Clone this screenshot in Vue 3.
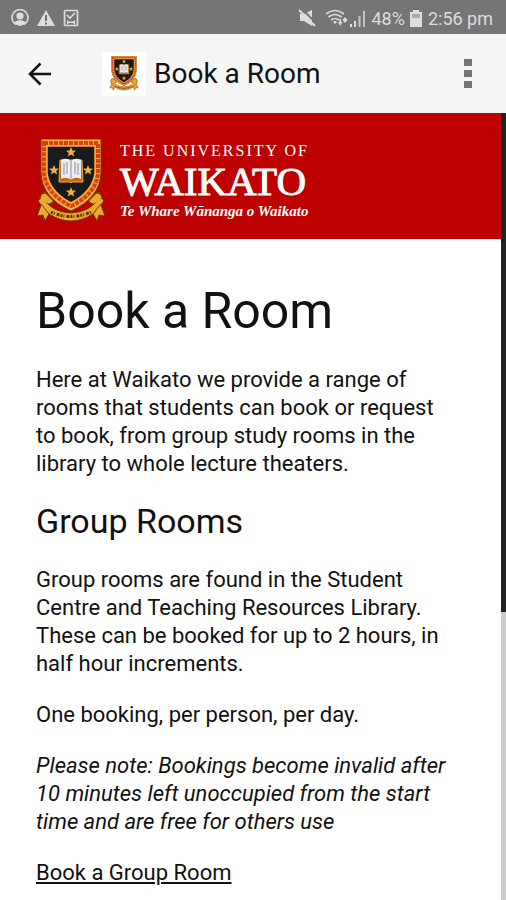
<script setup>
const intro = 'Here at Waikato we provide a range of rooms that students can book or request to book, from group study rooms in the library to whole lecture theaters.'
</script>

<template>
  <div class="app">
    <svg class="defs" aria-hidden="true">
      <symbol id="crest" viewBox="0 0 70 84">
        <path d="M2 62 L6 57 Q14 73 35 74 Q56 73 64 57 L68 62 L65 66 L69 77 L63 76 L61 82 L57 75 Q46 82 35 82 Q24 82 13 75 L9 82 L7 76 L1 77 L5 66 Z" fill="#eda82e" stroke="#6c3608" stroke-width="1" />
        <path d="M5 65 Q8 68 13 75 M65 65 Q62 68 57 75" fill="none" stroke="#793b08" />
        <path d="M4 60 Q4 53 10 54 L17 61 Q18 64 13 65 M66 60 Q66 53 60 54 L53 61 Q52 64 57 65" fill="#eda82e" stroke="#793b08" stroke-width="1.5" />
        <path d="M5 0 H65 V34 Q64 59 35 72 Q6 59 5 34 Z" fill="#f6b13a" stroke="#60401f" stroke-width="1" />
        <path d="M8 4 H62 V34 Q60 55 35 67 Q10 55 8 34 Z" fill="none" stroke="#df3c1a" stroke-width="4" stroke-dasharray="4 1" />
        <path d="M11 7 H59 V34 Q57 52 35 64 Q13 52 11 34 Z" fill="#191a1d" stroke="#f4ae37" stroke-width="1.5" />
        <g fill="#f4b03a">
          <path id="star" d="M35 8 L36.4 11.5 L40 11.7 L37.2 14 L38.2 17.5 L35 15.5 L31.8 17.5 L32.8 14 L30 11.7 L33.6 11.5 Z" />
          <use href="#star" x="-17" y="18" />
          <use href="#star" x="17" y="18" />
          <use href="#star" y="40" />
        </g>
        <path d="M24 21 L23 43 H34 L35 44 L36 43 H47 L46 21 Z" fill="#c76716" stroke="#f4ae37" />
        <path d="M25 21 Q31 18 35 22 Q39 18 45 21 V40 Q39 37 35 41 Q31 37 25 40 Z" fill="#edf0f2" />
        <path d="M35 22 V41 M28 24 V36 M31 23 V35 M39 23 V35 M42 24 V36" stroke="#8a8e93" stroke-width="1" />
        <path d="M15 73 Q35 82 55 73" fill="none" stroke="#59350d" stroke-width="3" stroke-dasharray="2 1 1 2 3 1" />
      </symbol>
    </svg>

    <div class="status">
      <div class="notices">
        <svg width="18" height="18" viewBox="0 0 18 18" aria-hidden="true">
          <path d="M5 15.5 A8 8 0 1 1 13 15.5" fill="none" stroke="#ddd" stroke-width="1.6" />
          <circle cx="9" cy="7" r="3.6" fill="#ddd" />
          <path d="M2.8 13.5 Q9 8.5 15.2 13.5 Q9 20.5 2.8 13.5" fill="#ddd" />
        </svg>
        <svg width="18" height="18" viewBox="0 0 18 18" aria-hidden="true">
          <path d="M9 1 L18 17 H0 Z" fill="#ddd" />
          <path d="M9 6 V12 M9 13.5 V15.5" stroke="#707070" stroke-width="2" />
        </svg>
        <svg width="16" height="18" viewBox="0 0 16 18" aria-hidden="true">
          <rect x="1.5" y="1.5" width="13" height="15" rx="1" fill="none" stroke="#ddd" stroke-width="1.7" />
          <path d="M4 6 L7 9 L12 4" fill="none" stroke="#ddd" stroke-width="1.7" />
          <path d="M4 16 V11 L6 12.5 H10 L12 11 V16 L10 14 H6 Z" fill="#ddd" />
        </svg>
      </div>
      <div class="system">
        <svg width="18" height="18" viewBox="0 0 18 18" aria-hidden="true">
          <path d="M1 5 H5 L13 1 V17 L5 12 H1 Z" fill="#ddd" />
          <path d="M2 -1 L18 15" stroke="#757575" stroke-width="2" />
          <path d="M0 1 L16 17" stroke="#ddd" stroke-width="2.2" />
        </svg>
        <svg class="wifi" width="23" height="18" viewBox="0 0 23 18" aria-hidden="true">
          <g fill="none" stroke="#ddd" stroke-width="1.7">
            <path d="M1 5 Q10 -2 19 5" />
            <path d="M3.500 8 Q10 3 16.500 8" />
            <path d="M6 11 Q10 8 14 11" />
          </g>
          <path d="M8 13 Q10 11 12 13 L10 15 Z M13 13 H14.500 V10 H16 V13 H17.500 L15.200 17 Z M17.500 11 L20 8 L22.500 11 L20 14 Z" fill="#ddd" />
        </svg>
        <svg class="signal" width="17" height="17" viewBox="0 0 17 17" aria-hidden="true">
          <path d="M1 14 H3 V17 H1 Z M5 11 H7 V17 H5 Z" fill="#ddd" />
          <path d="M9.500 6 H11.500 V17 H9.500 Z M14 1 H16 V17 H14 Z" fill="#c4c4c4" />
        </svg>
        <span>48%</span>
        <svg class="battery" width="12" height="17" viewBox="0 0 12 17" aria-hidden="true">
          <path d="M3 0 H9 V2 H12 V17 H0 V2 H3 Z" fill="#ddd" />
          <path d="M2 4 H10 V8 H2 Z" fill="#a9a9a9" />
        </svg>
        <span>2:56 pm</span>
      </div>
    </div>

    <header class="bar">
      <button class="back" type="button" aria-label="Back">
        <svg width="24" height="24" viewBox="0 0 24 24" aria-hidden="true">
          <path d="M23 12 H2 M12.500 1.500 L2 12 L12.500 22.500" fill="none" stroke="#111" stroke-width="2.5" />
        </svg>
      </button>
      <span class="badge">
        <svg width="32" height="35" aria-hidden="true"><use href="#crest" /></svg>
      </span>
      <span class="title">Book a Room</span>
      <button class="menu" type="button" aria-label="More options">
        <i></i><i></i><i></i>
      </button>
    </header>

    <div class="body">
      <main>
        <div class="brand">
          <svg width="70" height="84" aria-hidden="true"><use href="#crest" /></svg>
          <div class="wordmark">
            <span class="small">THE UNIVERSITY OF</span>
            <span class="large">WAIKATO</span>
            <span class="maori">Te Whare Wānanga o Waikato</span>
          </div>
        </div>
        <article>
          <h1>Book a Room</h1>
          <p>{{ intro }}</p>
          <h2>Group Rooms</h2>
          <p>Group rooms are found in the Student Centre and Teaching Resources Library. These can be booked for up to 2 hours, in half hour increments.</p>
          <p>One booking, per person, per day.</p>
          <p><em>Please note: Bookings become invalid after 10 minutes left unoccupied from the start time and are free for others use</em></p>
          <p><a href="#book">Book a Group Room</a></p>
        </article>
      </main>
      <div class="track"><div class="thumb"></div></div>
    </div>
  </div>
</template>

<style>
body {
  background: #fff;
}
</style>

<style scoped>
.app {
  display: flex;
  flex-direction: column;
  height: 100vh;
  overflow: hidden;
  font-family: Roboto, "Liberation Sans", sans-serif;
  color: #111;
}
.defs {
  position: absolute;
  width: 0;
  height: 0;
}
.status {
  display: flex;
  flex: none;
  justify-content: space-between;
  align-items: center;
  height: 34px;
  padding: 2px 13px 0 11px;
  box-sizing: border-box;
  background: #757575;
  color: #ddd;
  font-size: 18px;
}
.notices {
  display: flex;
  gap: 8px;
}
.system {
  display: flex;
  align-items: center;
  white-space: nowrap;
}
.wifi {
  margin-left: 8px;
}
.signal {
  margin: 0 6px 0 1px;
}
.battery {
  margin: 0 6px 0 5px;
}
.bar {
  display: flex;
  flex: none;
  align-items: center;
  height: 79px;
  padding: 0 28px;
  box-sizing: border-box;
  background: #f5f5f5;
}
button {
  padding: 0;
  border: 0;
  background: none;
}
.back {
  display: flex;
  margin-right: 50px;
}
.badge {
  display: flex;
  align-items: center;
  justify-content: center;
  width: 44px;
  height: 44px;
  margin-right: 8px;
  background: #fff;
}
.title {
  flex: 1;
  font-size: 28px;
  line-height: 32px;
}
.menu {
  display: flex;
  flex-direction: column;
  gap: 4px;
  padding: 0 6px;
}
.menu i {
  width: 8px;
  height: 7px;
  background: #757575;
}
.body {
  display: flex;
  flex: 1;
  min-height: 0;
}
main {
  flex: 1;
  overflow: hidden;
  background: #fff;
}
.brand {
  display: flex;
  gap: 14px;
  padding: 26px 36px 16px;
  background: #bd0000;
  color: #fff;
  font-family: "Liberation Serif", serif;
}
.wordmark {
  display: flex;
  flex-direction: column;
  white-space: nowrap;
}
.small {
  font-size: 16px;
  line-height: 24px;
  letter-spacing: 2px;
}
.large {
  font-size: 41px;
  line-height: 36px;
  -webkit-text-stroke: 1px #fff;
}
.maori {
  font-size: 15px;
  line-height: 24px;
  font-style: italic;
  font-weight: bold;
}
article {
  padding: 43px 46px 0 36px;
}
h1,
h2,
p {
  margin: 0;
  font-weight: 400;
}
h1 {
  margin-bottom: 26px;
  font-size: 50px;
  line-height: 58px;
}
h2 {
  margin-bottom: 25px;
  font-size: 34px;
  line-height: 40px;
}
p {
  margin-bottom: 23px;
  font-size: 22px;
  line-height: 28px;
}
a {
  color: inherit;
}
.track {
  flex: none;
  width: 5px;
  background: #ccc;
}
.thumb {
  height: 63.4%;
  background: #222;
}
</style>
